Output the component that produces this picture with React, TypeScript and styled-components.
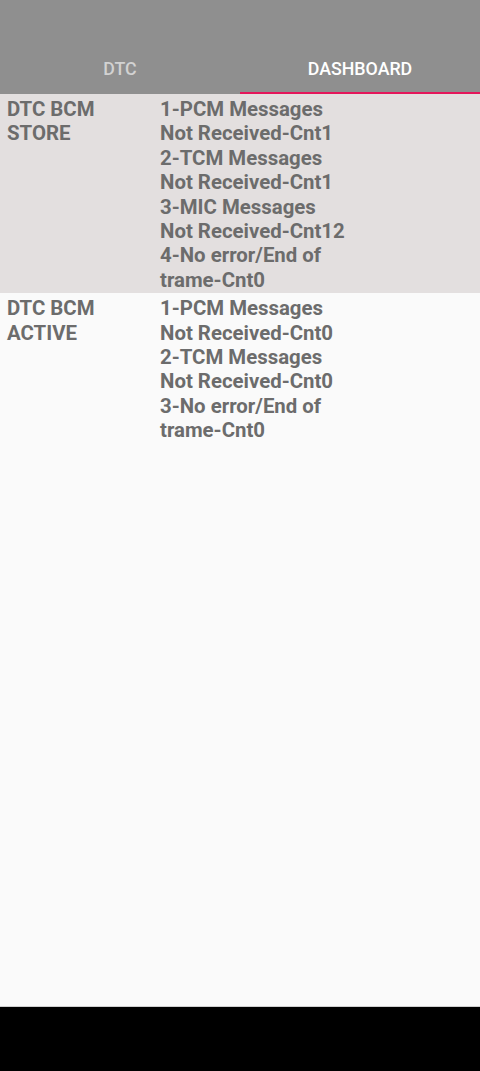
import React, { useState } from "react";
import styled, { createGlobalStyle } from "styled-components";

const GlobalStyle = createGlobalStyle`
  html, body {
    margin: 0;
    padding: 0;
    background: #000;
  }
  body {
    font-family: Roboto, "Noto Sans", sans-serif;
  }
`;

const rows = [
  {
    title: "DTC BCM STORE",
    lines: [
      "1-PCM Messages Not Received-Cnt1",
      "2-TCM Messages Not Received-Cnt1",
      "3-MIC Messages Not Received-Cnt12",
      "4-No error/End of trame-Cnt0",
    ],
  },
  {
    title: "DTC BCM ACTIVE",
    lines: [
      "1-PCM Messages Not Received-Cnt0",
      "2-TCM Messages Not Received-Cnt0",
      "3-No error/End of trame-Cnt0",
    ],
  },
];

const App = () => {
  const [tab, setTab] = useState(1);
  return (
    <>
      <GlobalStyle />
      <Screen>
        <Header>
          <TabBar>
            {["DTC", "DASHBOARD"].map((name, index) => (
              <Tab key={name} active={index === tab} onClick={() => setTab(index)}>
                {name}
              </Tab>
            ))}
          </TabBar>
        </Header>
        <List>
          {rows.map((row, index) => (
            <Row key={row.title} shaded={index % 2 === 0}>
              <Title>{row.title}</Title>
              <Values>
                {row.lines.map((line) => (
                  <Line key={line}>{line}</Line>
                ))}
              </Values>
            </Row>
          ))}
        </List>
        <NavBar />
      </Screen>
    </>
  );
};

const Screen = styled.div`
  width: 480px;
  height: 1071px;
  display: flex;
  flex-direction: column;
  background: #fafafa;
  overflow: hidden;
`;
const Header = styled.div`
  height: 94px;
  background: #8f8f8f;
  display: flex;
  flex-direction: column;
  justify-content: flex-end;
`;
const TabBar = styled.div`
  display: grid;
  grid-template-columns: 1fr 1fr;
  height: 54px;
`;
const Tab = styled.div<{ active: boolean }>`
  display: flex;
  align-items: center;
  justify-content: center;
  padding-top: 4px;
  font-size: 17.8px;
  font-weight: 500;
  color: ${(props) => (props.active ? "#ffffff" : "#d2d2d2")};
  border-bottom: 2px solid ${(props) => (props.active ? "#e5175b" : "transparent")};
`;
const List = styled.div`
  flex: 1;
  background: #fafafa;
`;
const Row = styled.div<{ shaded: boolean }>`
  display: grid;
  grid-template-columns: 153px 1fr;
  padding: 3px 0 1px 7px;
  background: ${(props) => (props.shaded ? "#e3dfdf" : "#fafafa")};
  color: #6c6c6c;
  font-size: 20.4px;
  font-weight: 700;
  line-height: 24.4px;
`;
const Title = styled.div`
  width: 110px;
`;
const Values = styled.div`
  width: 190px;
`;
const Line = styled.div``;
const NavBar = styled.div`
  height: 64px;
  background: #000;
  border-top: 1px solid #cfcfcf;
`;

export default App;
